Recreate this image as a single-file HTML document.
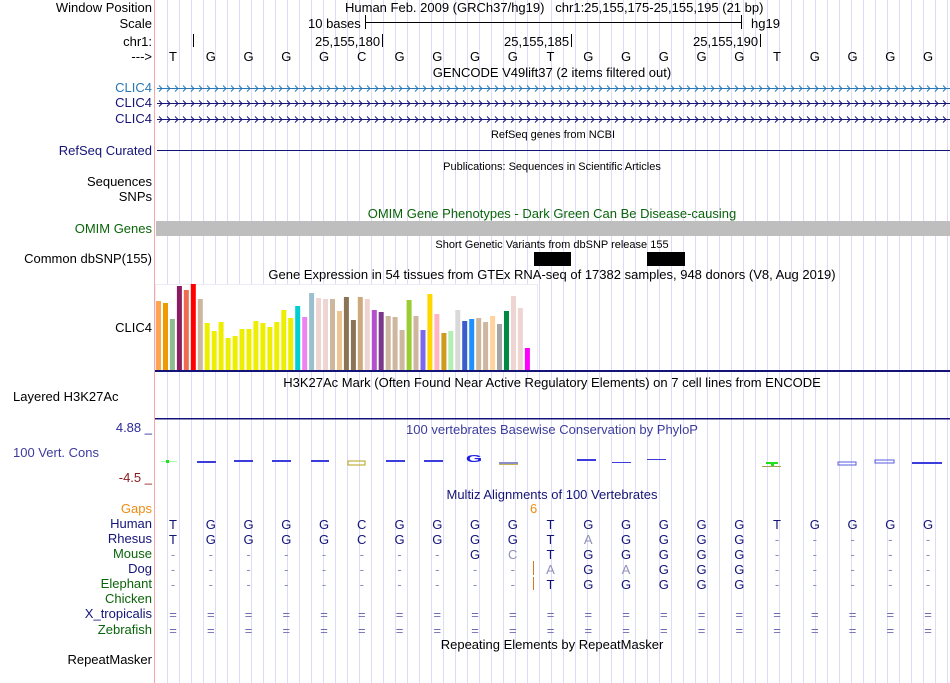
<!DOCTYPE html>
<html><head><meta charset="utf-8"><style>
html,body{margin:0;padding:0;background:#fff;}
body{width:950px;height:683px;position:relative;overflow:hidden;font-family:"Liberation Sans",sans-serif;font-size:13px;color:#000;}
.grid{position:absolute;left:156px;top:0;width:794px;height:683px;background:repeating-linear-gradient(to right,transparent 0,transparent 11px,#dcdcf8 11px,#dcdcf8 12px);}
.red{position:absolute;left:154px;top:0;width:1px;height:683px;background:#f4a8a8;}
.l{position:absolute;right:798px;white-space:nowrap;line-height:14px;}
.ll{position:absolute;left:13px;white-space:nowrap;line-height:14px;}
.t{position:absolute;white-space:nowrap;line-height:14px;}
.c{position:absolute;white-space:nowrap;line-height:14px;transform:translateX(-50%);}
.s{font-size:11px;}
svg{position:absolute;left:0;top:0;}
</style></head><body>
<div class="grid"></div><div class="red"></div>

<div class="l" style="top:1px">Window Position</div>
<div class="t" style="top:1px;left:345px">Human Feb. 2009 (GRCh37/hg19)&nbsp;&nbsp;&nbsp;chr1:25,155,175-25,155,195 (21 bp)</div>
<div class="l" style="top:17px">Scale</div>
<div class="t" style="top:17px;left:308px">10 bases</div>
<div class="t" style="top:17px;left:751px">hg19</div>
<div class="l" style="top:35px">chr1:</div>
<div class="t" style="top:35px;left:315px">25,155,180</div>
<div class="t" style="top:35px;left:504px">25,155,185</div>
<div class="t" style="top:35px;left:693px">25,155,190</div>
<div class="l" style="top:50px">---&gt;</div>
<div id="seq"></div>
<div class="c" style="top:66px;left:552px">GENCODE V49lift37 (2 items filtered out)</div>
<div class="l" style="top:81px;color:#2878b8">CLIC4</div>
<div class="l" style="top:96px;color:#141478">CLIC4</div>
<div class="l" style="top:112px;color:#141478">CLIC4</div>
<div class="c s" style="top:128px;left:553px">RefSeq genes from NCBI</div>
<div class="l" style="top:144px;color:#141478">RefSeq Curated</div>
<div class="c s" style="top:160px;left:552px">Publications: Sequences in Scientific Articles</div>
<div class="l" style="top:175px">Sequences</div>
<div class="l" style="top:190px">SNPs</div>
<div class="c" style="top:207px;left:552px;color:#0a640a">OMIM Gene Phenotypes - Dark Green Can Be Disease-causing</div>
<div class="l" style="top:222px;color:#0a640a">OMIM Genes</div>
<div class="c s" style="top:238px;left:552px">Short Genetic Variants from dbSNP release 155</div>
<div class="l" style="top:252px">Common dbSNP(155)</div>
<div class="c" style="top:268px;left:552px">Gene Expression in 54 tissues from GTEx RNA-seq of 17382 samples, 948 donors (V8, Aug 2019)</div>
<div class="l" style="top:321px">CLIC4</div>
<div class="c" style="top:376px;left:552px">H3K27Ac Mark (Often Found Near Active Regulatory Elements) on 7 cell lines from ENCODE</div>
<div class="ll" style="top:390px">Layered H3K27Ac</div>
<div class="l" style="top:421px;color:#2a2a9a">4.88 _</div>
<div class="c" style="top:423px;left:552px;color:#3c3c9c">100 vertebrates Basewise Conservation by PhyloP</div>
<div class="ll" style="top:446px;color:#3c3c9c">100 Vert. Cons</div>
<div class="l" style="top:471px;color:#8a1a1a">-4.5 _</div>
<div class="c" style="top:488px;left:552px;color:#141478">Multiz Alignments of 100 Vertebrates</div>
<div class="l" style="top:502px;color:#f08c14">Gaps</div>
<div class="t" style="top:502px;left:530px;color:#f08c14">6</div>
<div class="l" style="top:517px;color:#141478">Human</div>
<div class="l" style="top:532px;color:#141478">Rhesus</div>
<div class="l" style="top:547px;color:#0a640a">Mouse</div>
<div class="l" style="top:562px;color:#141478">Dog</div>
<div class="l" style="top:577px;color:#0a640a">Elephant</div>
<div class="l" style="top:592px;color:#0a640a">Chicken</div>
<div class="l" style="top:607px;color:#141478">X_tropicalis</div>
<div class="l" style="top:623px;color:#0a640a">Zebrafish</div>
<div class="c" style="top:638px;left:552px">Repeating Elements by RepeatMasker</div>
<div class="l" style="top:653px">RepeatMasker</div>

<svg width="950" height="683" xmlns="http://www.w3.org/2000/svg">
<g stroke="#000" stroke-width="1">
<line x1="365.5" y1="15" x2="365.5" y2="29"/><line x1="365" y1="22.5" x2="742" y2="22.5"/><line x1="741.5" y1="15" x2="741.5" y2="29"/>
<line x1="193.5" y1="34" x2="193.5" y2="47"/><line x1="382.5" y1="34" x2="382.5" y2="47"/><line x1="571.5" y1="34" x2="571.5" y2="47"/><line x1="760.5" y1="34" x2="760.5" y2="47"/>
</g>
<line x1="157" y1="88.5" x2="950" y2="88.5" stroke="#2878b8"/>
<line x1="157" y1="103.5" x2="950" y2="103.5" stroke="#141478"/>
<line x1="157" y1="119.5" x2="950" y2="119.5" stroke="#141478"/>
<defs>
<pattern id="a1" x="157" y="84" width="8" height="9" patternUnits="userSpaceOnUse"><path d="M2 1.5 L5 4.5 L2 7.5" fill="none" stroke="#2878b8"/></pattern>
<pattern id="a2" x="157" y="99" width="8" height="9" patternUnits="userSpaceOnUse"><path d="M2 1.5 L5 4.5 L2 7.5" fill="none" stroke="#141478"/></pattern>
<pattern id="a3" x="157" y="115" width="8" height="9" patternUnits="userSpaceOnUse"><path d="M2 1.5 L5 4.5 L2 7.5" fill="none" stroke="#141478"/></pattern>
</defs>
<rect x="157" y="84" width="793" height="9" fill="url(#a1)"/>
<rect x="157" y="99" width="793" height="9" fill="url(#a2)"/>
<rect x="157" y="115" width="793" height="9" fill="url(#a3)"/>
<line x1="157" y1="150.5" x2="950" y2="150.5" stroke="#141478"/>
<rect x="156" y="221" width="794" height="15" fill="#bebebe"/>
<rect x="534" y="252" width="37" height="14" fill="#000"/>
<rect x="647" y="252" width="38" height="14" fill="#000"/>
<rect x="155.5" y="284.5" width="382" height="86" fill="#fff" stroke="#ececf4"/>
<g id="bars"></g>
<rect x="155" y="370" width="795" height="2" fill="#141478"/>
<rect x="155" y="418" width="795" height="1.5" fill="#141478"/>
<g fill="#3c3cdc">
<rect x="161" y="461" width="16" height="1" fill="#a0ffa0"/><rect x="166" y="460" width="3" height="3" fill="#1ee01e"/>
<rect x="197" y="461" width="19" height="2"/><rect x="234" y="460" width="19" height="2"/><rect x="272" y="460" width="19" height="2"/><rect x="311" y="460" width="18" height="2"/>
<rect x="348" y="461" width="17" height="4" fill="none" stroke="#b4a014"/>
<rect x="386" y="460" width="19" height="2"/><rect x="424" y="460" width="19" height="2"/>
<text x="474" y="462" font-family="Liberation Sans" font-weight="bold" font-size="14" fill="#1e1ee0" text-anchor="middle" transform="translate(474 462) scale(1.5 0.7) translate(-474 -462)">G</text>
<rect x="499" y="462" width="19" height="2" fill="#8c8cc8"/><rect x="499" y="464" width="19" height="1" fill="#c8b450"/>
<rect x="577" y="459" width="19" height="2"/><rect x="612" y="462" width="19" height="1"/><rect x="647" y="459" width="19" height="1"/>
<rect x="766" y="462" width="12" height="2" fill="#1ee01e"/><rect x="771" y="462" width="3" height="5" fill="#1ee01e"/><rect x="762" y="466" width="19" height="1" fill="#a0a050"/>
<rect x="838" y="462" width="18" height="3" fill="none" stroke="#5a5ae0"/><rect x="875" y="460" width="19" height="3" fill="none" stroke="#5a5ae0"/><rect x="912" y="462" width="30" height="2"/>
</g>
<line x1="533.5" y1="561" x2="533.5" y2="575" stroke="#d2781e"/>
<line x1="533.5" y1="577" x2="533.5" y2="590" stroke="#d2781e"/>
<g id="mz" font-family="Liberation Sans" font-size="13" text-anchor="middle"></g>
</svg>
<script>
var xs=[];for(var i=0;i<21;i++)xs.push(173+37.75*i);
var seq="TGGGGCGGGGTGGGGGTGGGG";
var h='';for(i=0;i<21;i++)h+='<div class="c" style="top:50px;left:'+xs[i]+'px">'+seq[i]+'</div>';
document.getElementById('seq').innerHTML=h;
var tops=[63,69,117,18,30,12,57,129,153,126,174,168,147,147,123,129,141,126,90,114,78,111,39,54,57,57,93,51,120,51,57,90,96,108,111,150,60,108,150,42,102,159,153,90,123,117,114,126,108,132,93,48,84,204];
var cols=["#FFA54F","#EE9A00","#8FBC8F","#8B1C62","#EE6A50","#FF0000","#CDB79E","#EEEE00","#EEEE00","#EEEE00","#EEEE00","#EEEE00","#EEEE00","#EEEE00","#EEEE00","#EEEE00","#EEEE00","#EEEE00","#EEEE00","#EEEE00","#00CED1","#EE82EE","#9AC0CD","#EED5D2","#EED5D2","#CDB79E","#EEC591","#8B7355","#8B7355","#CDAA7D","#EED5D2","#B452CD","#7A378B","#CDB79E","#CDB79E","#CDB79E","#9ACD32","#CDB79E","#7B68EE","#FFD700","#FFB6C1","#CD9B1D","#B4EEB4","#D9D9D9","#3A5FCD","#1E90FF","#CDB79E","#CDB79E","#FFD39B","#A6A6A6","#008B45","#EED5D2","#EED5D2","#FF00FF"];
var b='';for(i=0;i<54;i++){var y=280+tops[i]/3;b+='<rect x="'+(156+i*6.96).toFixed(1)+'" y="'+y.toFixed(1)+'" width="5" height="'+(370-y).toFixed(1)+'" fill="'+cols[i]+'"/>';}
document.getElementById('bars').innerHTML=b;
var rows=[
[529,"TGGGGCGGGGTGGGGGTGGGG"],
[544,"TGGGGCGGGGTaGGGG-----"],
[559,"--------GcTGGGGG-----"],
[574,"----------aGaGGG-----"],
[589,"----------TGGGGG-----"],
[619,"====================="],
[635,"====================="]];
var m='';
rows.forEach(function(r){var s=r[1];
 for(var i=0;i<21;i++){var ch=s[i];if(!ch)continue;var col="#141478",t=ch;
  if(ch=='-'){col="#8c8cb4";}
  else if(ch=='='){col="#6c6cb4";}
  else if(ch==ch.toLowerCase()){col="#9090b8";t=ch.toUpperCase();}
  m+='<text x="'+xs[i]+'" y="'+r[0]+'" fill="'+col+'">'+t+'</text>';}
});
document.getElementById('mz').innerHTML=m;
</script>
</body></html>
